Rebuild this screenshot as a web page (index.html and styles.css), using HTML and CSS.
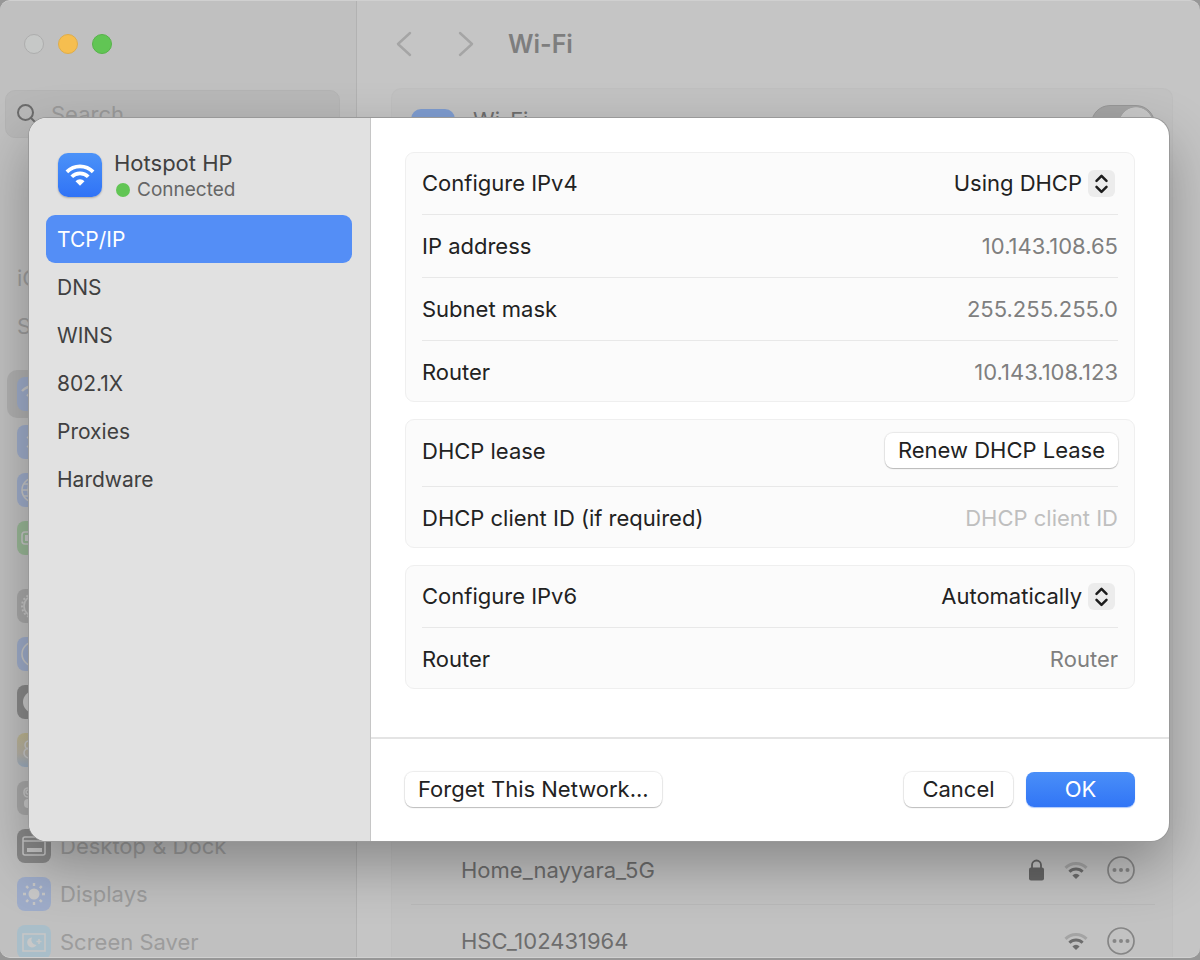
FILE: index.html
```html
<!DOCTYPE html>
<html lang="en">
<head>
<meta charset="utf-8">
<title>Wi-Fi</title>
<link rel="stylesheet" href="styles.css">
</head>
<body>
<svg class="defs" aria-hidden="true">
  <symbol id="wifi" viewBox="0 0 32 24">
    <path d="M2 9.200a19.600 19.600 0 0 1 28 0" class="arc arc-outer"/>
    <path d="M7.200 14.400a12.400 12.400 0 0 1 17.600 0" class="arc"/>
    <path d="M16 24l-4.800-4.800a6.600 6.600 0 0 1 9.600 0z" class="solid"/>
  </symbol>
  <symbol id="more" viewBox="0 0 28 28">
    <circle cx="14" cy="14" r="13" fill="none" stroke="currentColor" stroke-width="1.700"/>
    <circle cx="7.500" cy="14" r="2" fill="currentColor"/><circle cx="14" cy="14" r="2" fill="currentColor"/><circle cx="20.500" cy="14" r="2" fill="currentColor"/>
  </symbol>
  <symbol id="updown" viewBox="0 0 27 27">
    <path d="M8.500 10.800l5-5 5 5M8.500 16.800l5 5 5-5" fill="none" stroke="#1c1c1c" stroke-width="2.500" stroke-linecap="round" stroke-linejoin="round"/>
  </symbol>
</svg>

<div class="window">
  <aside class="side">
    <div class="lights"><i class="light close"></i><i class="light minimize"></i><i class="light full"></i></div>
    <label class="search">
      <svg width="20" height="20" viewBox="0 0 20 20"><circle cx="8.500" cy="8.500" r="7.500"/><path d="M14 14l5 5"/></svg>
      <input type="search" placeholder="Search" aria-label="Search">
    </label>
    <div class="account"><span>iC</span><span>S</span></div>
    <nav class="apps">
      <div class="app current"><svg class="tile blue" viewBox="0 0 34 34"><path d="M5 14a17 17 0 0 1 24 0M10 19a10 10 0 0 1 14 0" class="line thick"/></svg></div>
      <div class="app"><svg class="tile blue" viewBox="0 0 34 34"><path d="M10 12l14 10-7 6V6l7 6-14 10" class="line"/></svg></div>
      <div class="app"><svg class="tile blue" viewBox="0 0 34 34"><circle cx="17" cy="17" r="12" class="line"/><ellipse cx="17" cy="17" rx="6" ry="12" class="line"/><path d="M5 17h24M7 11h20M7 23h20" class="line"/></svg></div>
      <div class="app"><svg class="tile green" viewBox="0 0 34 34"><rect x="5" y="11" width="22" height="12" rx="3" class="line"/><rect x="8" y="14" width="14" height="6" class="fill"/></svg></div>
      <div class="app group"><svg class="tile gray" viewBox="0 0 34 34"><circle cx="17" cy="17" r="10" class="line"/><circle cx="17" cy="17" r="12" class="line teeth"/></svg></div>
      <div class="app"><svg class="tile blue" viewBox="0 0 34 34"><circle cx="17" cy="17" r="12" class="line"/><path d="M11 14l6-1 6 1M17 13v6l-3 6M17 19l3 6" class="line"/></svg></div>
      <div class="app"><svg class="tile dark" viewBox="0 0 34 34"><circle cx="17" cy="17" r="11" class="fill"/></svg></div>
      <div class="app"><svg class="tile multi" viewBox="0 0 34 34"><circle cx="12" cy="12" r="4" class="line"/><circle cx="12" cy="20" r="5" class="line"/></svg></div>
      <div class="app"><svg class="tile gray" viewBox="0 0 34 34"><rect x="7" y="7" width="20" height="9" rx="4" class="line"/><circle cx="11" cy="11" r="2" class="line"/><rect x="7" y="18" width="20" height="9" rx="4" class="fill"/></svg></div>
      <div class="app"><svg class="tile dark" viewBox="0 0 34 34"><rect x="6" y="8" width="22" height="18" rx="2" class="line"/><path d="M6 12h22" class="line"/><rect x="10" y="19" width="15" height="4" class="fill"/></svg><span>Desktop &amp; Dock</span></div>
      <div class="app"><svg class="tile blue" viewBox="0 0 34 34"><circle cx="17" cy="17" r="5.500" class="fill"/><path d="M17 6v3M17 25v3M6 17h3M25 17h3M9.200 9.200l2 2M22.800 22.800l2 2M9.200 24.800l2-2M22.800 11.200l2-2" class="line thick"/></svg><span>Displays</span></div>
      <div class="app"><svg class="tile cyan" viewBox="0 0 34 34"><rect x="6" y="9" width="22" height="17" class="line"/><path d="M15 12.500a5 5 0 1 0 4.500 7.500 5 5 0 0 1-4.500-7.500z" class="fill"/><path d="M22 14v5M19.500 16.500h5" class="line"/></svg><span>Screen Saver</span></div>
    </nav>
  </aside>
  <main class="content">
    <header class="bar">
      <button class="nav-btn" aria-label="Back"><svg width="16" height="26" viewBox="0 0 16 26"><path d="M14 2L2 13l12 11"/></svg></button>
      <button class="nav-btn" aria-label="Forward"><svg width="16" height="26" viewBox="0 0 16 26"><path d="M2 2l12 11L2 24"/></svg></button>
      <h1>Wi-Fi</h1>
    </header>
    <section class="panel">
      <div class="power"><i class="power-icon"></i><label for="power">Wi-Fi</label><input id="power" class="switch" type="checkbox" role="switch"></div>
      <div class="network"><span class="name">Home_nayyara_5G</span>
        <svg class="lock" width="16" height="22" viewBox="0 0 16 22"><rect x="0" y="8.500" width="15" height="13" rx="2" fill="currentColor"/><path d="M3 9V6a4.500 4.500 0 0 1 9 0v3" fill="none" stroke="currentColor" stroke-width="1.800"/></svg>
        <svg class="signal"><use href="#wifi"/></svg>
        <button class="more" aria-label="More"><svg><use href="#more"/></svg></button></div>
      <div class="network last"><span class="name">HSC_102431964</span>
        <svg class="signal"><use href="#wifi"/></svg>
        <button class="more" aria-label="More"><svg><use href="#more"/></svg></button></div>
    </section>
  </main>
</div>

<div class="dialog" role="dialog" aria-label="Hotspot HP">
  <aside class="tabs">
    <div class="identity">
      <svg class="logo" viewBox="0 0 44 44"><use href="#wifi" x="7" y="10" width="30" height="23"/></svg>
      <div><div class="title">Hotspot HP</div><div class="status"><i></i>Connected</div></div>
    </div>
    <nav>
      <button class="tab active">TCP/IP</button>
      <button class="tab">DNS</button>
      <button class="tab">WINS</button>
      <button class="tab">802.1X</button>
      <button class="tab">Proxies</button>
      <button class="tab">Hardware</button>
    </nav>
  </aside>
  <div class="pane">
    <form class="settings">
      <section class="card">
        <div class="row"><label for="ipv4">Configure IPv4</label><span class="picker"><select id="ipv4"><option>Using DHCP</option></select><svg><use href="#updown"/></svg></span></div>
        <div class="row"><span>IP address</span><span class="value">10.143.108.65</span></div>
        <div class="row"><span>Subnet mask</span><span class="value">255.255.255.0</span></div>
        <div class="row"><span>Router</span><span class="value">10.143.108.123</span></div>
      </section>
      <section class="card">
        <div class="row tall"><span>DHCP lease</span><button type="button" class="btn">Renew DHCP Lease</button></div>
        <div class="row"><label for="client">DHCP client ID (if required)</label><input id="client" type="text" placeholder="DHCP client ID"></div>
      </section>
      <section class="card">
        <div class="row"><label for="ipv6">Configure IPv6</label><span class="picker"><select id="ipv6"><option>Automatically</option></select><svg><use href="#updown"/></svg></span></div>
        <div class="row"><span>Router</span><span class="value">Router</span></div>
      </section>
    </form>
    <footer class="actions">
      <button class="btn forget">Forget This Network...</button>
      <button class="btn wide">Cancel</button>
      <button class="btn wide primary">OK</button>
    </footer>
  </div>
</div>
</body>
</html>
```
FILE: styles.css
```css
* { box-sizing: border-box; }
body { margin: 0; height: 100vh; overflow: hidden; position: relative; background: #979797; padding-bottom: 2px; font: 22px/28px Inter, "Liberation Sans", sans-serif; color: #222; }
button, input, select { font: inherit; color: inherit; border: 0; background: none; padding: 0; margin: 0; outline: 0; }
svg { display: block; flex: none; }
.defs { position: absolute; width: 0; height: 0; }
.arc { fill: none; stroke: currentColor; stroke-width: 4; stroke-linecap: butt; }
.arc-outer { stroke-opacity: var(--outer, 1); }
.solid { fill: currentColor; }

/* Settings window behind the sheet */
.window { height: 100%; display: flex; overflow: hidden; background: #c5c5c5; border: 1px solid #d0d0d0; border-width: 1px 0; border-radius: 10px; }
.side { flex: none; width: 357px; background: #c0c0c0; border-right: 1px solid #b2b2b2; color: #9c9c9c; }
.lights { display: flex; gap: 14px; padding: 33px 24px 36px; }
.light { width: 20px; height: 20px; border-radius: 50%; border: 1px solid #adadad; background: #c6c8c7; }
.minimize { background: #f6be4f; border-color: #dfad49; }
.full { background: #61c554; border-color: #57b34a; }
.search { display: flex; align-items: center; gap: 14px; height: 48px; margin: 0 16px 0 5px; padding-left: 11px; border-radius: 10px; border: 1px solid #b4b4b4; background: #b8b8b8; }
.search svg { fill: none; stroke: #6c6c6c; stroke-width: 2; stroke-linecap: round; }
.search input { flex: 1; min-width: 0; }
.search input::placeholder { color: #9a9a9a; }
.account { display: grid; gap: 20px; padding: 126px 17px 30px; }
.apps { padding: 0 7px; }
.app { height: 48px; display: flex; align-items: center; gap: 9px; padding-left: 10px; border-radius: 10px; }
.app.group { margin-top: 20px; }
.app.current { background: #b0b0b0; }
.tile { width: 34px; height: 34px; border-radius: 8px; }
.blue { background: #9eacc9; }
.green { background: #99b796; }
.gray { background: #a8a8a8; }
.dark { background: #898989; }
.cyan { background: #a9bec9; }
.multi { background: linear-gradient(#bdb590, #b5b0a5 60%, #9cadc0); }
.line { fill: none; stroke: #c6c6c6; stroke-width: 1.6; }
.thick { stroke-width: 2.4; }
.teeth { stroke-width: 2; stroke-dasharray: 2 2; }
.fill { fill: #c8c8c8; }

.content { flex: 1; min-width: 0; display: flex; flex-direction: column; padding: 0 27px 0 34px; color: #6d6d6d; }
.bar { display: flex; align-items: center; height: 87px; padding: 0 5px 2px; }
.nav-btn { margin-right: 46px; }
.nav-btn + .nav-btn { margin-right: 34px; }
.nav-btn svg { fill: none; stroke: #a5a5a5; stroke-width: 2.4; stroke-linecap: round; stroke-linejoin: round; }
h1 { margin: 0; font-size: 25px; font-weight: 600; color: #7e7e7e; }
.panel { flex: 1; display: flex; flex-direction: column; border: 1px solid #bfbfbf; border-bottom: 0; border-radius: 10px 10px 0 0; background: #c2c2c2; padding: 0 17px 0 19px; }
.power { flex: 1; display: flex; align-items: flex-start; }
.power-icon { width: 44px; height: 44px; margin: 20px 18px 0 0; border-radius: 10px; background: #7e9cd0; }
.power label { flex: 1; margin-top: 17px; }
.switch { appearance: none; width: 64px; height: 38px; margin-top: 16px; border-radius: 19px; border: 1px solid #979797; background: radial-gradient(circle 17px at 44px 18px, #c8c8c8 96%, #a4a4a4 100%); }
.network { display: flex; align-items: center; height: 71px; padding: 2px 20px 0 50px; border-bottom: 1px solid #b9b9b9; }
.network.last { height: 52px; padding-top: 20px; border: 0; }
.name { flex: 1; }
.lock { color: #656565; margin-right: 19px; }
.signal { --outer: .35; width: 24px; height: 18px; margin-right: 19px; }
.more { color: #858585; }
.more svg { width: 28px; height: 28px; }

/* Network details sheet */
.dialog { position: absolute; inset: 118px 31px 119px 29px; display: flex; overflow: hidden; border-radius: 18px; background: #fff; box-shadow: 0 0 0 1px #999, 0 24px 56px rgba(0, 0, 0, .3); }
.tabs { flex: none; width: 342px; padding: 31px 18px 0 17px; background: #e1e1e1; border-right: 1px solid #c6c6c6; color: #404040; }
.identity { display: flex; align-items: flex-start; gap: 12px; height: 56px; margin: 0 0 10px 12px; }
.logo { width: 44px; height: 44px; margin-top: 4px; border-radius: 10px; color: #fff; background: linear-gradient(#4b92f8, #3073f6); box-shadow: 0 1px 2px rgba(0, 0, 0, .25); }
.status { display: flex; align-items: center; gap: 7px; font-size: 19px; line-height: 26px; color: #666; }
.status i { width: 14px; height: 14px; margin-left: 2px; border-radius: 50%; background: #61c554; }
.tab { display: block; width: 100%; height: 48px; padding: 1px 11px 0; text-align: left; border-radius: 9px; font-size: 21px; }
.active { background: #548ef6; color: #fff; }
.pane { flex: 1; min-width: 0; display: flex; flex-direction: column; }
.settings { flex: 1; display: flex; flex-direction: column; gap: 17px; padding: 34px; }
.card { border: 1px solid #efefef; border-radius: 9px; background: #fbfbfb; padding: 0 16px; }
.row { display: flex; align-items: center; justify-content: space-between; height: 63px; }
.row + .row { border-top: 1px solid #e8e8e8; }
.row:first-child, .row:last-child { height: 61px; }
.row:last-child { padding-top: 1px; }
.row:first-child { padding-bottom: 1px; }
.row.tall { height: 66px; padding-bottom: 5px; }
.value { color: #7f7f7f; }
.row input { width: 240px; text-align: right; }
.row input::placeholder { color: #bfbfbf; }
.picker { position: relative; display: flex; align-items: center; margin-right: 3px; }
.picker select { appearance: none; width: 200px; padding-right: 33px; text-align: right; text-align-last: right; }
.picker svg { position: absolute; right: 0; width: 27px; height: 27px; border-radius: 6px; background: #ececec; pointer-events: none; }
.actions { flex: none; display: flex; align-items: center; gap: 13px; height: 104px; padding: 0 34px 1px; border-top: 2px solid #e4e4e4; }
.btn { height: 35px; padding: 0 13px 2px; border-radius: 8px; background: #fff; box-shadow: 0 0 1px 1px rgba(0, 0, 0, .08), 0 1px 1px rgba(0, 0, 0, .2); }
.forget { margin-right: auto; }
.wide { width: 109px; }
.primary { color: #fff; background: linear-gradient(#4a8ff8, #3175f6); box-shadow: 0 1px 1px rgba(49, 117, 246, .4); }
```
